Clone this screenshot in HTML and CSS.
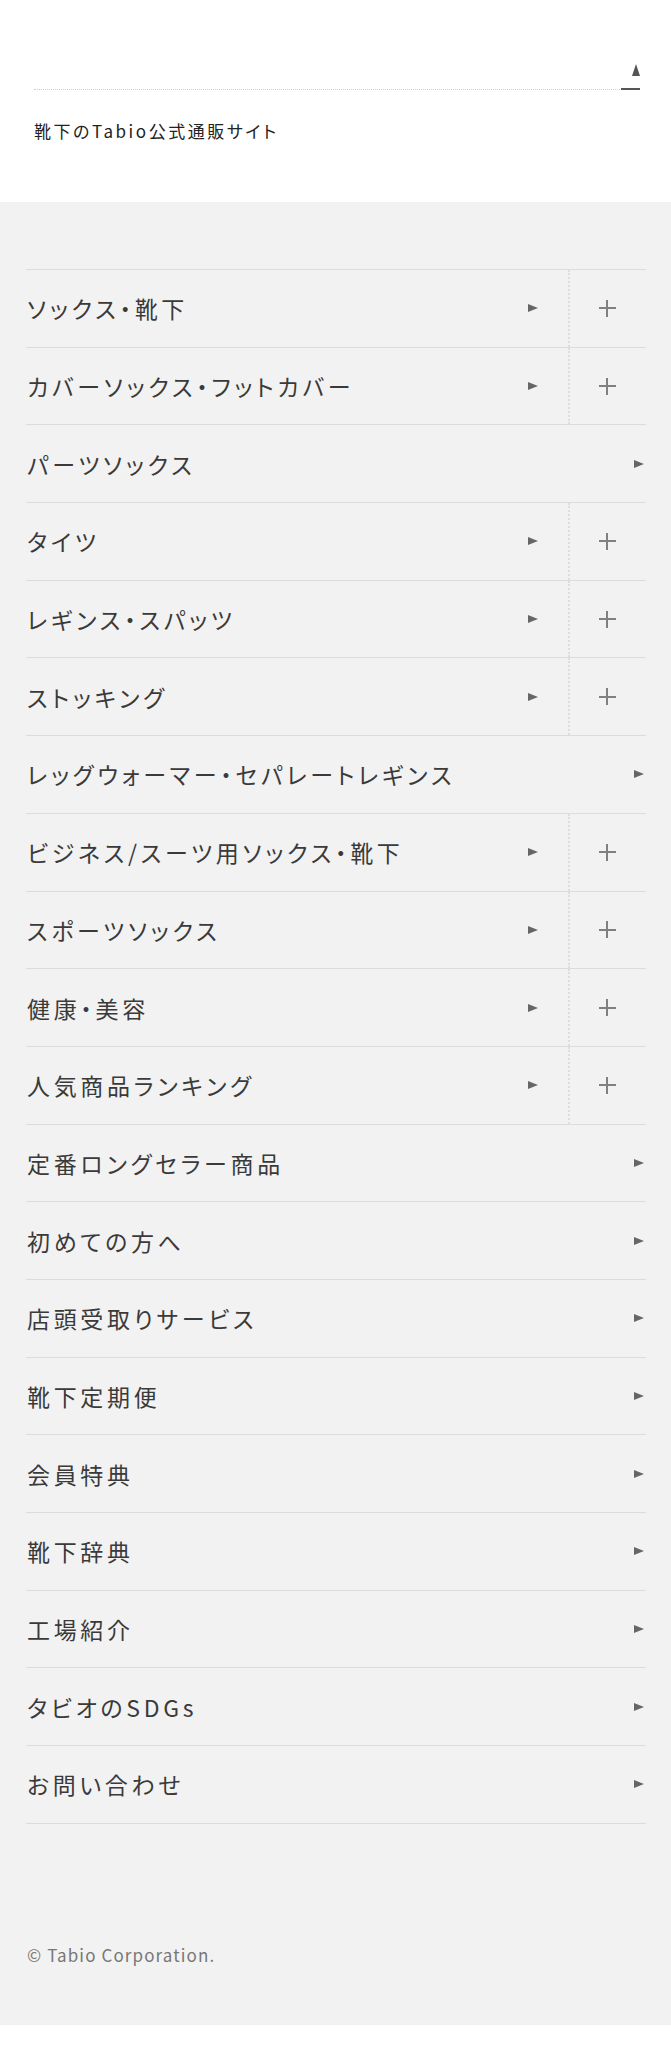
FILE: index.html
```html
<!DOCTYPE html>
<html lang="ja">
<head>
    <meta charset="UTF-8">
    <meta name="viewport" content="width=device-width, initial-scale=1.0">
    <title>靴下のTabio公式通販サイト</title>
    <link rel="stylesheet" href="styles.css">
</head>
<body>
    <header class="site-header">
        <div class="pagetop">
            <a href="#" class="pagetop-btn" aria-label="ページトップへ"></a>
        </div>
        <p class="site-title">靴下のTabio公式通販サイト</p>
    </header>

    <nav class="footer-nav">
        <ul class="nav-list">
            <li class="nav-item has-sub"><a href="#" class="nav-link">ソックス・靴下<span class="arrow"></span></a><button class="nav-toggle" aria-label="開く"></button></li>
            <li class="nav-item has-sub"><a href="#" class="nav-link">カバーソックス・フットカバー<span class="arrow"></span></a><button class="nav-toggle" aria-label="開く"></button></li>
            <li class="nav-item"><a href="#" class="nav-link">パーツソックス<span class="arrow"></span></a></li>
            <li class="nav-item has-sub"><a href="#" class="nav-link">タイツ<span class="arrow"></span></a><button class="nav-toggle" aria-label="開く"></button></li>
            <li class="nav-item has-sub"><a href="#" class="nav-link">レギンス・スパッツ<span class="arrow"></span></a><button class="nav-toggle" aria-label="開く"></button></li>
            <li class="nav-item has-sub"><a href="#" class="nav-link">ストッキング<span class="arrow"></span></a><button class="nav-toggle" aria-label="開く"></button></li>
            <li class="nav-item"><a href="#" class="nav-link">レッグウォーマー・セパレートレギンス<span class="arrow"></span></a></li>
            <li class="nav-item has-sub"><a href="#" class="nav-link">ビジネス/スーツ用ソックス・靴下<span class="arrow"></span></a><button class="nav-toggle" aria-label="開く"></button></li>
            <li class="nav-item has-sub"><a href="#" class="nav-link">スポーツソックス<span class="arrow"></span></a><button class="nav-toggle" aria-label="開く"></button></li>
            <li class="nav-item has-sub"><a href="#" class="nav-link">健康・美容<span class="arrow"></span></a><button class="nav-toggle" aria-label="開く"></button></li>
            <li class="nav-item has-sub"><a href="#" class="nav-link">人気商品ランキング<span class="arrow"></span></a><button class="nav-toggle" aria-label="開く"></button></li>
            <li class="nav-item"><a href="#" class="nav-link">定番ロングセラー商品<span class="arrow"></span></a></li>
            <li class="nav-item"><a href="#" class="nav-link">初めての方へ<span class="arrow"></span></a></li>
            <li class="nav-item"><a href="#" class="nav-link">店頭受取りサービス<span class="arrow"></span></a></li>
            <li class="nav-item"><a href="#" class="nav-link">靴下定期便<span class="arrow"></span></a></li>
            <li class="nav-item"><a href="#" class="nav-link">会員特典<span class="arrow"></span></a></li>
            <li class="nav-item"><a href="#" class="nav-link">靴下辞典<span class="arrow"></span></a></li>
            <li class="nav-item"><a href="#" class="nav-link">工場紹介<span class="arrow"></span></a></li>
            <li class="nav-item"><a href="#" class="nav-link">タビオのSDGs<span class="arrow"></span></a></li>
            <li class="nav-item"><a href="#" class="nav-link">お問い合わせ<span class="arrow"></span></a></li>
        </ul>
        <p class="copyright">&copy; Tabio Corporation.</p>
    </nav>
</body>
</html>
```

FILE: styles.css
```css
body {
    margin: 0;
    padding-bottom: 31px;
    background: #ffffff;
    font-family: "Noto Sans CJK JP", "Noto Sans", sans-serif;
    font-feature-settings: "palt";
    color: #333333;
}

a {
    color: inherit;
    text-decoration: none;
}

/* header */
.site-header {
    height: 202px;
    padding: 0 31px 0 34px;
    box-sizing: border-box;
}

.pagetop {
    display: flex;
    justify-content: flex-end;
    padding-top: 64px;
    border-bottom: 1px dotted #d0d0d0;
}

.pagetop-btn {
    display: flex;
    justify-content: flex-end;
    width: 19px;
    height: 24px;
    margin-bottom: -1px;
    border-bottom: 2px solid #555555;
}

.pagetop-btn::before {
    content: "";
    width: 0;
    height: 0;
    border-left: 4px solid transparent;
    border-right: 4px solid transparent;
    border-bottom: 12px solid #555555;
}

.site-title {
    margin: 29px 0 0;
    font-size: 17px;
    line-height: 24px;
    letter-spacing: 0.15em;
    color: #222222;
}

/* footer navigation */
.footer-nav {
    background: #f2f2f2;
    padding: 67px 25px 58px 26px;
}

.nav-list {
    list-style: none;
    margin: 0;
    padding: 0;
    border-top: 1px solid #dcdcdc;
}

.nav-item {
    display: flex;
    height: 76.7px;
    border-bottom: 1px solid #dcdcdc;
}

.nav-link {
    flex: 1;
    display: flex;
    align-items: center;
    justify-content: space-between;
    padding: 0 2px 0 1px;
    font-size: 23px;
    letter-spacing: 0.16em;
    color: #3a3a3a;
}

.has-sub .nav-link {
    padding-right: 30px;
}

.arrow {
    width: 0;
    height: 0;
    border-top: 4px solid transparent;
    border-bottom: 4px solid transparent;
    border-left: 10px solid #666666;
}

.nav-toggle {
    position: relative;
    width: 78px;
    padding: 0;
    background: none;
    border: none;
    border-left: 2px dotted #dddddd;
    cursor: pointer;
}

.nav-toggle::before,
.nav-toggle::after {
    content: "";
    position: absolute;
    top: 50%;
    left: 50%;
    background: #808080;
}

.nav-toggle::before {
    width: 17px;
    height: 2px;
    margin: -1px 0 0 -9px;
}

.nav-toggle::after {
    width: 2px;
    height: 17px;
    margin: -8.5px 0 0 -2px;
}

.copyright {
    margin: 119px 0 0 1px;
    font-size: 17px;
    line-height: 24px;
    letter-spacing: 0.065em;
    color: #777777;
}
```
